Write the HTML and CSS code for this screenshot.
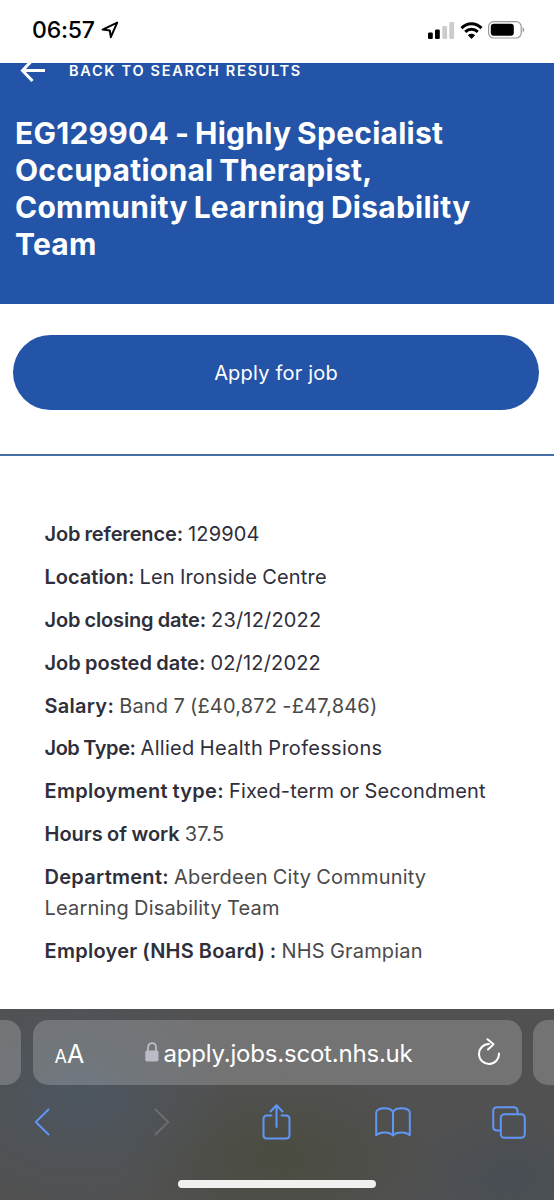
FILE: index.html
```html
<!DOCTYPE html>
<html lang="en">
<head>
    <meta charset="UTF-8">
    <meta name="viewport" content="width=device-width, initial-scale=1.0">
    <title>EG129904 - Highly Specialist Occupational Therapist</title>
    <link rel="stylesheet" href="styles.css">
</head>
<body>
    <div class="status-bar">
        <span class="time">06:57</span>
        <svg class="location" width="18" height="18" viewBox="0 0 18 18"><path d="M16.2 1.6 L1.6 8.6 L8.8 9.4 L9.8 16.2 Z"/></svg>
        <div class="status-icons">
            <svg width="27" height="17" viewBox="0 0 27 17">
                <rect x="0" y="10.5" width="4.8" height="6.5" rx="1.3"/>
                <rect x="7" y="7.5" width="4.8" height="9.5" rx="1.3"/>
                <rect class="off" x="14.3" y="4" width="4.8" height="13" rx="1.3"/>
                <rect class="off" x="21.3" y="0" width="4.8" height="17" rx="1.3"/>
            </svg>
            <svg class="wifi" width="23" height="17" viewBox="0 0 23 17">
                <path d="M1.5 6.1 C7.2 0.3 15.8 0.3 21.5 6.1"/>
                <path d="M5.2 9.9 C8.9 6.3 14.1 6.3 17.8 9.9"/>
                <path class="dot" d="M7.9 13.2 C10 11.4 13 11.4 15.1 13.2 L11.5 16.9 Z"/>
            </svg>
            <svg class="battery" width="37" height="18" viewBox="0 0 37 18">
                <rect class="shell" x="0.6" y="0.6" width="32.6" height="16.4" rx="5"/>
                <rect x="2.8" y="2.8" width="23" height="12" rx="3"/>
                <path class="tip" d="M34.6 6 Q38 8.8 34.6 11.6 Z"/>
            </svg>
        </div>
    </div>

    <header class="job-header">
        <a class="back">
            <svg width="26" height="22" viewBox="0 0 26 22"><path d="M25 7.5 H2.5 M12.5 -3 L2.5 7.5 L12.5 18"/></svg>
            <span>BACK TO SEARCH RESULTS</span>
        </a>
        <h1>EG129904 - Highly Specialist<br>Occupational Therapist,<br>Community Learning Disability<br>Team</h1>
    </header>

    <div class="apply">
        <button class="apply-button">Apply for job</button>
    </div>

    <main class="details">
        <p><b class="tight">Job reference:</b> 129904</p>
        <p><b>Location:</b> Len Ironside Centre</p>
        <p><b class="tight">Job closing date:</b> 23/12/2022</p>
        <p><b>Job posted date:</b> 02/12/2022</p>
        <p><b class="loose">Salary:</b> <span class="grey">Band 7 (£40,872 -£47,846)</span></p>
        <p><b class="tighter">Job Type:</b> <span class="wide">Allied Health Professions</span></p>
        <p><b class="loose">Employment type:</b> Fixed-term or Secondment</p>
        <p><b>Hours of work</b> <span class="grey">37.5</span></p>
        <p><b class="loose">Department:</b> <span class="grey">Aberdeen City Community<br>Learning Disability Team</span></p>
        <p><b class="loose">Employer (NHS Board) :</b> <span class="grey">NHS Grampian</span></p>
    </main>

    <footer class="browser">
        <div class="tabs">
            <div class="tab tab-prev"></div>
            <div class="tab address">
                <span class="text-size"><small>A</small>A</span>
                <div class="url">
                    <svg width="14" height="20" viewBox="0 0 14 20"><path class="shackle" d="M3 9 V5.5 C3 -0.3 11 -0.3 11 5.5 V9"/><rect x="0.3" y="8.5" width="13.2" height="11" rx="1.8"/></svg>
                    <span>apply.jobs.scot.nhs.uk</span>
                </div>
                <svg class="reload" width="24" height="28" viewBox="0 0 24 28"><path d="M12 6 A10 10 0 1 0 22 15.5 M10.5 1.2 L16.5 6.2 L11 11.5"/></svg>
            </div>
            <div class="tab tab-next"></div>
        </div>
        <div class="toolbar">
            <svg class="prev" width="16" height="28" viewBox="0 0 16 28"><path d="M14.5 1.5 L1.8 14 L14.5 26.5"/></svg>
            <svg class="next" width="16" height="28" viewBox="0 0 16 28"><path d="M1.5 1.5 L14.2 14 L1.5 26.5"/></svg>
            <svg class="share" width="29" height="36" viewBox="0 0 29 36"><path d="M9.5 11.5 H5 Q1.5 11.5 1.5 15 V31 Q1.5 34.5 5 34.5 H24 Q27.5 34.5 27.5 31 V15 Q27.5 11.5 24 11.5 H19.5 M14.5 23 V1.5 M8.5 7.5 L14.5 1.3 L20.5 7.5"/></svg>
            <svg class="book" width="36" height="30" viewBox="0 0 36 30"><path d="M18 28.5 C14.5 24.5 5 24.5 1.2 28.3 V6 C1.2 0.2 15 -0.6 18 5 C21 -0.6 34.8 0.2 34.8 6 V28.3 C31 24.5 21.5 24.5 18 28.5 V5"/></svg>
            <svg class="pages" width="34" height="33" viewBox="0 0 34 33"><path d="M8.5 24.5 H5 Q1.2 24.5 1.2 20.5 V5 Q1.2 1.2 5 1.2 H21.5 Q25.5 1.2 25.5 5 V8"/><rect x="8.8" y="8.2" width="24" height="23.6" rx="3.8"/></svg>
        </div>
        <div class="home-indicator"></div>
    </footer>
</body>
</html>
```
FILE: styles.css
```css
* {
    box-sizing: border-box;
}
body {
    margin: 0;
    height: 1200px;
    overflow: hidden;
    display: flex;
    flex-direction: column;
    background-color: #fff;
    font-family: Inter, "Liberation Sans", sans-serif;
    color: #2f2f3b;
}
svg {
    display: block;
    flex: none;
}

/* phone status bar */
.status-bar {
    height: 63px;
    padding: 0 29px 3px 32px;
    display: flex;
    align-items: center;
    flex: none;
    color: #000;
}
.time {
    font-size: 23px;
    font-weight: 500;
    letter-spacing: -0.2px;
}
.location {
    margin-left: 6px;
    fill: none;
    stroke: #000;
    stroke-width: 2;
    stroke-linejoin: round;
}
.status-icons {
    margin-left: auto;
    display: flex;
    align-items: center;
    gap: 5px;
}
.status-icons .off {
    fill: #ccc;
}
.wifi {
    fill: none;
    stroke: #000;
    stroke-width: 3;
}
.wifi .dot {
    fill: #000;
    stroke: none;
}
.battery .shell {
    fill: none;
    stroke: #999;
    stroke-width: 1.2;
}
.battery .tip {
    fill: #999;
}

/* blue header */
.job-header {
    height: 241px;
    padding-left: 15px;
    background-color: #2454a7;
    color: #fff;
    flex: none;
}
.back {
    display: flex;
    height: 22px;
    padding-left: 5px;
    font-size: 14.5px;
    font-weight: 600;
    line-height: 15px;
    letter-spacing: 1.7px;
}
.back svg {
    margin-right: 23px;
    fill: none;
    stroke: #fff;
    stroke-width: 3;
}
h1 {
    margin: 30px 0 0;
    font-size: 30px;
    font-weight: 700;
    line-height: 37px;
    letter-spacing: 0.25px;
    word-spacing: -1.5px;
    white-space: nowrap;
}

.apply {
    height: 152px;
    padding: 31px 15px 0 13px;
    border-bottom: 2px solid #4670a5;
    flex: none;
}
.apply-button {
    width: 100%;
    height: 75px;
    border: none;
    border-radius: 38px;
    background-color: #2454a7;
    color: #fff;
    font-family: Inter, sans-serif;
    font-size: 20px;
    letter-spacing: 0.2px;
}

.details {
    height: 552.5px;
    padding: 63px 0 0 44.5px;
    font-size: 20px;
    line-height: 31px;
    letter-spacing: 0.18px;
    word-spacing: -0.7px;
    white-space: nowrap;
    flex: none;
}
.details p {
    margin: 0 0 11.9px;
}
.details b {
    font-weight: 600;
    letter-spacing: 0;
}
.details .tight {
    letter-spacing: -0.15px;
}
.details .tighter {
    letter-spacing: -0.45px;
}
.details .loose {
    letter-spacing: 0.28px;
}
.wide {
    letter-spacing: 0.3px;
}
.grey {
    color: #4a4a4a;
}

/* browser bars */
.browser {
    height: 191.5px;
    padding-top: 11.5px;
    background: radial-gradient(ellipse 150px 120px at 80px 80px, #4d5660, transparent),
        radial-gradient(ellipse 160px 90px at 280px 150px, #4a4c40, transparent),
        radial-gradient(ellipse 110px 70px at 510px 170px, #484e55, transparent),
        #515151;
    flex: none;
}
.tabs {
    display: flex;
    justify-content: space-between;
}
.tab {
    height: 65px;
    background-color: rgba(255, 255, 255, 0.2);
}
.tab-prev {
    width: 21px;
    border-radius: 0 15px 15px 0;
}
.tab-next {
    width: 21px;
    border-radius: 15px 0 0 15px;
}
.address {
    width: 489px;
    padding: 0 21px 0 22px;
    display: flex;
    align-items: center;
    border-radius: 15px;
    color: #fff;
}
.text-size {
    width: 90px;
    padding-top: 2px;
    font-size: 25px;
}
.text-size small {
    font-size: 18px;
}
.url {
    display: flex;
    align-items: center;
    gap: 5px;
    padding-top: 1px;
    font-size: 24px;
    letter-spacing: -0.2px;
}
.url svg {
    margin-bottom: 2px;
    fill: #bcbcc8;
}
.url .shackle {
    fill: none;
    stroke: #bcbcc8;
    stroke-width: 1.8;
}
.reload {
    margin: 0 0 2px auto;
    fill: none;
    stroke: #fff;
    stroke-width: 2;
    stroke-linecap: round;
    stroke-linejoin: round;
}
.toolbar {
    height: 74px;
    padding-left: 34px;
    display: flex;
    align-items: center;
}
.toolbar svg {
    fill: none;
    stroke: #6096f5;
    stroke-width: 2;
    stroke-linecap: round;
    stroke-linejoin: round;
}
.toolbar .next {
    margin-left: 104px;
    stroke: #6b6d70;
}
.toolbar .share {
    margin-left: 92px;
}
.toolbar .book {
    margin-left: 84px;
}
.toolbar .pages {
    margin-left: 81px;
}
.home-indicator {
    width: 198px;
    height: 8px;
    margin: 21px auto 0;
    border-radius: 4px;
    background-color: #f0f0ef;
}
```
